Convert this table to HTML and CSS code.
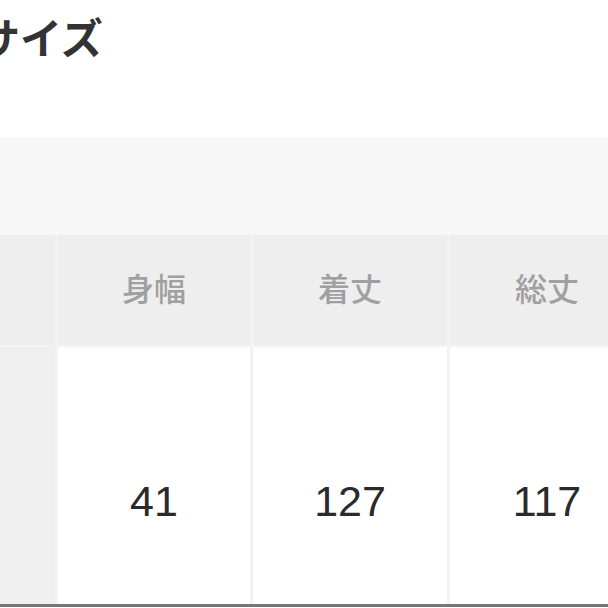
FILE: index.html
```html
<!DOCTYPE html>
<html lang="ja">
<head>
<meta charset="utf-8">
<link rel="stylesheet" href="styles.css">
</head>
<body>
<div class="page">
  <h1 class="title">サイズ</h1>
  <div class="band"></div>
  <div class="table">
    <div class="cell head label"></div>
    <div class="cell head">身幅</div>
    <div class="cell head">着丈</div>
    <div class="cell head">総丈</div>
    <div class="cell body label"></div>
    <div class="cell body num">41</div>
    <div class="cell body num">127</div>
    <div class="cell body num">117</div>
  </div>
</div>
</body>
</html>
```
FILE: styles.css
```css
html, body {
  margin: 0;
  padding: 0;
  background: #ffffff;
}
.page {
  width: 608px;
  height: 608px;
  overflow: hidden;
  display: flex;
  flex-direction: column;
}
.title {
  margin: 13px 0 0 -22px;
  height: 45px;
  font-family: "Noto Sans CJK JP", sans-serif;
  font-size: 42px;
  line-height: 45px;
  font-weight: 700;
  color: #333333;
  white-space: nowrap;
}
.band {
  margin-top: 79px;
  height: 98px;
  background: #f7f7f7;
  flex: none;
}
.table {
  display: grid;
  grid-template-columns: 55px 192px 194px 194px;
  grid-template-rows: 110px 257px;
  column-gap: 3px;
  row-gap: 2px;
  background: #f3f3f3;
  border-bottom: 3px solid #777777;
  flex: none;
  width: 640px;
}
.cell {
  display: flex;
  align-items: center;
  justify-content: center;
}
.head {
  background: #eeeeee;
  font-family: "Noto Sans CJK JP", sans-serif;
  font-size: 32px;
  font-weight: 500;
  color: #a0a0a0;
  padding-bottom: 6px;
  box-sizing: border-box;
}
.body {
  background: #ffffff;
}
.body.label {
  background: #efefef;
}
.num {
  font-family: "Liberation Sans", Arial, sans-serif;
  font-size: 43px;
  color: #2a2a2a;
  padding-top: 52px;
  box-sizing: border-box;
}
```
